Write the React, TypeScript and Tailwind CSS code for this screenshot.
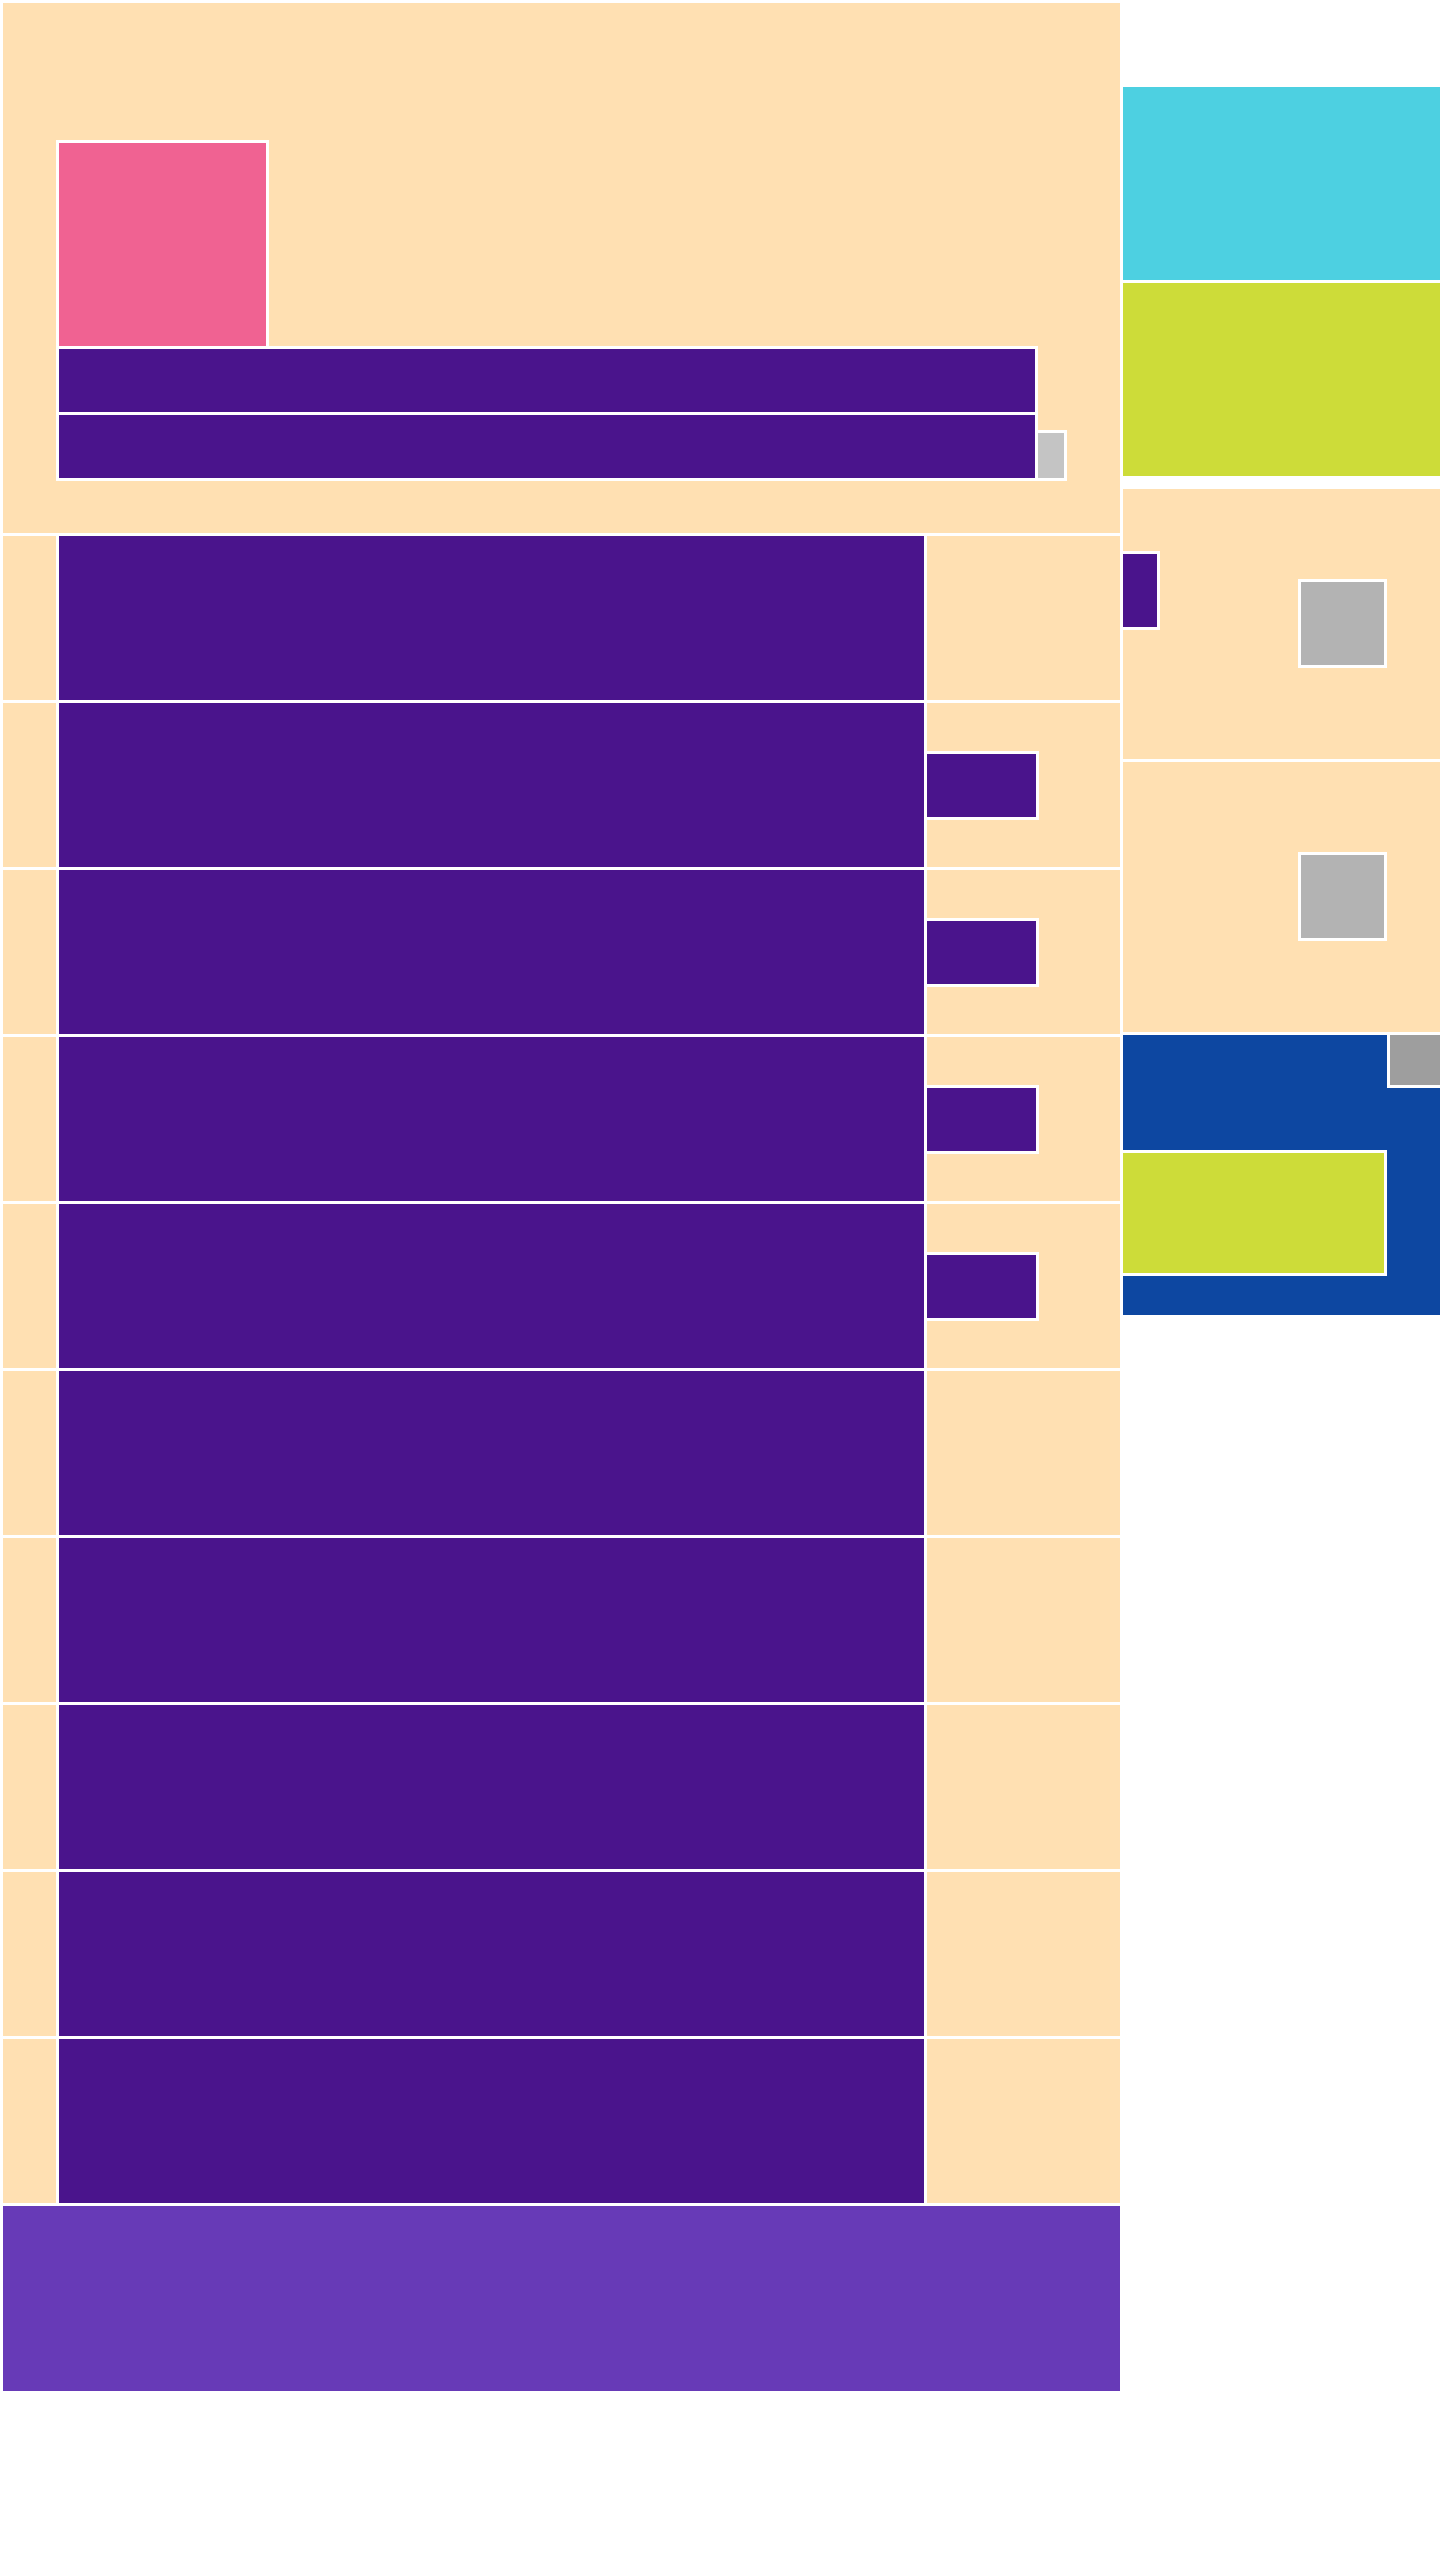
import React from "react";

const rows = [false, true, true, true, true, false, false, false, false, false];

const Row = ({ withTag }: { withTag: boolean }) => {
  return (
    <div className="flex h-[164px] bg-[#FFE0B2]">
      <div className="w-[53px] shrink-0" />
      <div className="w-[871px] shrink-0 border-x-[3px] border-white bg-[#4A148C]" />
      <div className="flex flex-1 items-center">
        {withTag && (
          <div className="relative -ml-[3px] h-[69px] w-[115px] border-[3px] border-white bg-[#4A148C]" />
        )}
      </div>
    </div>
  );
};

const Header = () => {
  return (
    <div className="h-[530px] bg-[#FFE0B2] pl-[53px] pt-[137px]">
      <div className="flex w-fit flex-col">
        <div className="h-[209px] w-[213px] border-[3px] border-white bg-[#F06292]" />
        <div className="-mt-[3px] h-[69px] w-[982px] border-[3px] border-white bg-[#4A148C]" />
        <div className="-mt-[3px] flex items-end">
          <div className="h-[69px] w-[982px] border-[3px] border-white bg-[#4A148C]" />
          <div className="-ml-[3px] h-[51px] w-[32px] border-[3px] border-white bg-[#C4C4C4]" />
        </div>
      </div>
    </div>
  );
};

const Sidebar = () => {
  return (
    <div className="mt-[84px] flex w-[317px] shrink-0 flex-col">
      <div className="h-[193px] bg-[#4DD0E1]" />
      <div className="mt-[3px] h-[193px] bg-[#CDDC39]" />

      <div className="mt-[13px] flex h-[270px] items-start bg-[#FFE0B2]">
        <div className="-ml-[3px] mt-[62px] h-[79px] w-[40px] border-[3px] border-white bg-[#4A148C]" />
        <div className="ml-[138px] mt-[90px] h-[89px] w-[89px] border-[3px] border-white bg-[#B3B3B3]" />
      </div>

      <div className="mt-[3px] h-[270px] bg-[#FFE0B2] pl-[175px] pt-[90px]">
        <div className="h-[89px] w-[89px] border-[3px] border-white bg-[#B3B3B3]" />
      </div>

      <div className="mt-[3px] flex h-[280px] flex-col bg-[#0D47A1]">
        <div className="h-[53px] w-[53px] self-end border-b-[3px] border-l-[3px] border-white bg-[#9E9E9E]" />
        <div className="-ml-[3px] mt-[62px] h-[126px] w-[267px] border-[3px] border-white bg-[#CDDC39]" />
      </div>
    </div>
  );
};

export default function App() {
  return (
    <div className="min-h-screen w-[1440px] overflow-hidden bg-white">
      <div className="flex gap-[3px] pl-[3px] pt-[3px]">
        <div className="flex w-[1117px] shrink-0 flex-col gap-[3px]">
          <Header />
          {rows.map((tag, i) => (
            <Row key={i} withTag={tag} />
          ))}
          <div className="h-[185px] bg-[#673AB7]" />
        </div>
        <Sidebar />
      </div>
    </div>
  );
}
